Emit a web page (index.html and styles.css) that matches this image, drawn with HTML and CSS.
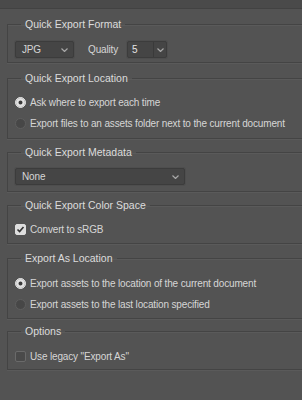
FILE: index.html
```html
<html>
  <head>
    <title>Export Preferences</title>
    <link rel="stylesheet" href="styles.css">
  </head>
  <body>
    <div class="topbar"></div>

    <fieldset class="group g-format">
      <legend>Quick Export Format</legend>
      <div class="row">
        <div class="select sel-format">
          <span>JPG</span>
          <svg class="chev" width="7" height="4" viewBox="0 0 7 4"><path d="M0.5 0.5 L3.5 3.5 L6.5 0.5" /></svg>
        </div>
        <span class="label quality">Quality</span>
        <div class="spin">
          <span class="spin-val">5</span>
          <span class="spin-btn">
            <svg class="chev" width="7" height="4" viewBox="0 0 7 4"><path d="M0.5 0.5 L3.5 3.5 L6.5 0.5" /></svg>
          </span>
        </div>
      </div>
    </fieldset>

    <fieldset class="group g-location">
      <legend>Quick Export Location</legend>
      <label class="option"><span class="radio on"></span>Ask where to export each time</label>
      <label class="option"><span class="radio"></span>Export files to an assets folder next to the current document</label>
    </fieldset>

    <fieldset class="group g-meta">
      <legend>Quick Export Metadata</legend>
      <div class="select sel-meta">
        <span>None</span>
        <svg class="chev" width="7" height="4" viewBox="0 0 7 4"><path d="M0.5 0.5 L3.5 3.5 L6.5 0.5" /></svg>
      </div>
    </fieldset>

    <fieldset class="group g-color">
      <legend>Quick Export Color Space</legend>
      <label class="option"><span class="check on">
        <svg width="9" height="9" viewBox="0 0 9 9"><path d="M1.5 4.5 L3.6 6.6 L7.5 2" /></svg>
      </span>Convert to sRGB</label>
    </fieldset>

    <fieldset class="group g-asloc">
      <legend>Export As Location</legend>
      <label class="option"><span class="radio on"></span>Export assets to the location of the current document</label>
      <label class="option"><span class="radio"></span>Export assets to the last location specified</label>
    </fieldset>

    <fieldset class="group g-options">
      <legend>Options</legend>
      <label class="option"><span class="check"></span>Use legacy "Export As"</label>
    </fieldset>
  </body>
</html>
```

FILE: styles.css
```css
body {
  margin: 0;
  background: #535353;
  color: #d6d6d6;
  font-family: "Liberation Sans", Arial, sans-serif;
  font-size: 10px;
  letter-spacing: -0.15px;
  overflow: hidden;
}

.topbar {
  height: 8px;
  background: #4a4a4a;
  border-bottom: 1px solid #424242;
}

/* groups run off the right edge of the panel, so no right border */
.group {
  margin: 6px 0 0 7px;
  padding: 0 7px;
  border: 1px solid #444;
  border-right: none;
  box-shadow: 0 1px 0 #5a5a5a, inset 0 1px 0 #5a5a5a;
}

.group legend {
  margin-left: 6px;
  padding: 0 4px;
  line-height: 14px;
  font-size: 10.5px;
  letter-spacing: 0;
  color: #dcdcdc;
}

/* per-group spacing, measured from the reference */
.g-format {
  margin-top: 8px;
  padding-top: 10px;
  padding-bottom: 4px;
}

.g-location {
  margin-top: 8px;
  padding-top: 7px;
  padding-bottom: 5px;
}

.g-meta {
  margin-top: 6px;
  padding-top: 9px;
  padding-bottom: 6px;
}

.g-color {
  margin-top: 6px;
  padding-top: 7px;
  padding-bottom: 4px;
}

.g-asloc {
  margin-top: 7px;
  padding-top: 8px;
  padding-bottom: 4px;
}

.g-options {
  margin-top: 5px;
  padding-top: 8px;
  padding-bottom: 3px;
}

.row {
  display: flex;
  align-items: center;
  height: 17px;
}

.select {
  display: flex;
  align-items: center;
  justify-content: space-between;
  box-sizing: border-box;
  height: 17px;
  padding: 0 5px 0 6px;
  background: #454545;
  border: 1px solid #3c3c3c;
  box-shadow: 0 0 0 1px #4e4e4e;
  border-radius: 2px;
}

.sel-format {
  width: 59px;
}

.sel-meta {
  width: 170px;
}

.chev {
  fill: none;
  stroke: #a8a8a8;
  stroke-width: 1.2;
}

.quality {
  margin-left: 14px;
}

.spin {
  display: flex;
  box-sizing: border-box;
  height: 17px;
  margin-left: 9px;
  background: #454545;
  border: 1px solid #3c3c3c;
  box-shadow: 0 0 0 1px #4e4e4e;
  border-radius: 2px;
}

.spin-val {
  width: 21px;
  padding-left: 4px;
  line-height: 15px;
  color: #e4e4e4;
}

.spin-btn {
  display: flex;
  align-items: center;
  justify-content: center;
  width: 12px;
  border-left: 1px solid #3a3a3a;
}

.option {
  display: flex;
  align-items: center;
  height: 20px;
  white-space: nowrap;
}

.option + .option {
  margin-top: 1px;
}

.radio {
  box-sizing: border-box;
  width: 11px;
  height: 11px;
  margin-right: 4px;
  border-radius: 50%;
  background: #474747;
  border: 1px solid #5e5e5e;
}

.radio.on {
  background: #e2e2e2;
  border-color: #e2e2e2;
  box-shadow: inset 0 0 0 2.5px #e2e2e2, inset 0 0 0 5px #3a3a3a;
}

.check {
  display: flex;
  align-items: center;
  justify-content: center;
  box-sizing: border-box;
  width: 11px;
  height: 11px;
  margin-right: 4px;
  border-radius: 2px;
  background: #4a4a4a;
  border: 1px solid #6a6a6a;
}

.check.on {
  background: #dedede;
  border-color: #dedede;
}

.check svg {
  fill: none;
  stroke: #333;
  stroke-width: 1.6;
}
```
